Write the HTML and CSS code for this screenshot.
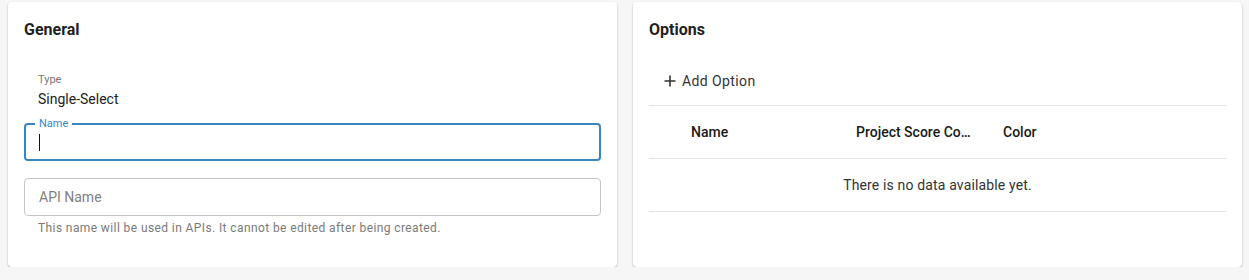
FILE: index.html
```html
<!doctype html>
<html lang="en">
<head>
    <meta charset="utf-8" />
    <title>Field Settings</title>
    <link rel="stylesheet" href="styles.css">
</head>
<body>
    <div class="layout">
        <!-- General -->
        <div class="card">
            <h3 class="card-title">General</h3>
            <div class="readonly">
                <div class="readonly-label">Type</div>
                <div class="readonly-value">Single-Select</div>
            </div>
            <div class="field focused">
                <span class="field-label">Name</span>
                <span class="caret"></span>
            </div>
            <div class="field">
                <span class="placeholder">API Name</span>
            </div>
            <div class="hint">This name will be used in APIs. It cannot be edited after being created.</div>
        </div>

        <!-- Options -->
        <div class="card">
            <h3 class="card-title">Options</h3>
            <button class="add-button">
                <svg width="12" height="12" viewBox="0 0 12 12"><path d="M6 0.5v11M0.5 6h11" stroke="#333" stroke-width="1.6" fill="none"/></svg>
                Add Option
            </button>
            <div class="table">
                <div class="table-head">
                    <div class="col-spacer"></div>
                    <div class="col-name">Name</div>
                    <div class="col-score"><span>Project Score Co…</span></div>
                    <div class="col-color">Color</div>
                </div>
                <div class="table-empty">There is no data available yet.</div>
            </div>
        </div>
    </div>
</body>
</html>
```

FILE: styles.css
```css
body {
    font-family: Roboto, 'Noto Sans', sans-serif;
    margin: 0;
    padding: 2px 7px 0 8px;
    background: #f6f6f6;
    color: #212121;
}
.layout {
    display: grid;
    grid-template-columns: 1fr 1fr;
    gap: 16px;
}
.card {
    background: white;
    border-radius: 4px;
    padding: 15px 16px 0 16px;
    height: 250px;
    box-shadow: 0 1px 2px rgba(0,0,0,0.3);
}
.card-title {
    margin: 0;
    font-size: 16px;
    font-weight: 700;
    line-height: 26px;
    color: #1f1f1f;
}
.readonly {
    padding: 30px 14px 0 14px;
}
.readonly-label {
    font-size: 11px;
    line-height: 14px;
    color: #777;
}
.readonly-value {
    font-size: 14px;
    line-height: 20px;
    margin-top: 2px;
    color: #222;
}
.field {
    position: relative;
    height: 36px;
    border: 1px solid #c4c4c4;
    border-radius: 4px;
    padding: 0 14px;
    display: flex;
    align-items: center;
    margin-top: 17px;
}
.field.focused {
    border: 2px solid #3a84bf;
    padding: 0 13px;
    height: 34px;
    margin-top: 14px;
}
.field-label {
    position: absolute;
    top: -8px;
    left: 9px;
    padding: 0 4px;
    background: white;
    font-size: 11px;
    line-height: 14px;
    color: #3a84bf;
}
.caret {
    width: 1px;
    height: 17px;
    background: #111;
}
.placeholder {
    font-size: 14px;
    color: #808080;
}
.hint {
    font-size: 12px;
    line-height: 16px;
    color: #7a7a7a;
    padding: 4px 14px 0 14px;
    letter-spacing: 0.4px;
}
.add-button {
    display: flex;
    align-items: center;
    gap: 6px;
    border: none;
    background: none;
    font-family: inherit;
    font-size: 14px;
    color: #333;
    padding: 0 0 0 15px;
    margin-top: 27px;
    height: 22px;
    letter-spacing: 0.4px;
}
.table {
    margin-top: 13px;
    border-top: 1px solid #e3e3e3;
}
.table-head {
    display: flex;
    align-items: center;
    height: 52px;
    border-bottom: 1px solid #e3e3e3;
    font-size: 14px;
    font-weight: 500;
    color: #1a1a1a;
}
.col-spacer {
    width: 42px;
}
.col-name {
    width: 165px;
}
.col-score {
    width: 147px;
}
.col-score span {
    white-space: nowrap;
}
.table-empty {
    height: 52px;
    line-height: 52px;
    text-align: center;
    font-size: 14px;
    color: #333;
    letter-spacing: 0.15px;
    border-bottom: 1px solid #e3e3e3;
}
```
